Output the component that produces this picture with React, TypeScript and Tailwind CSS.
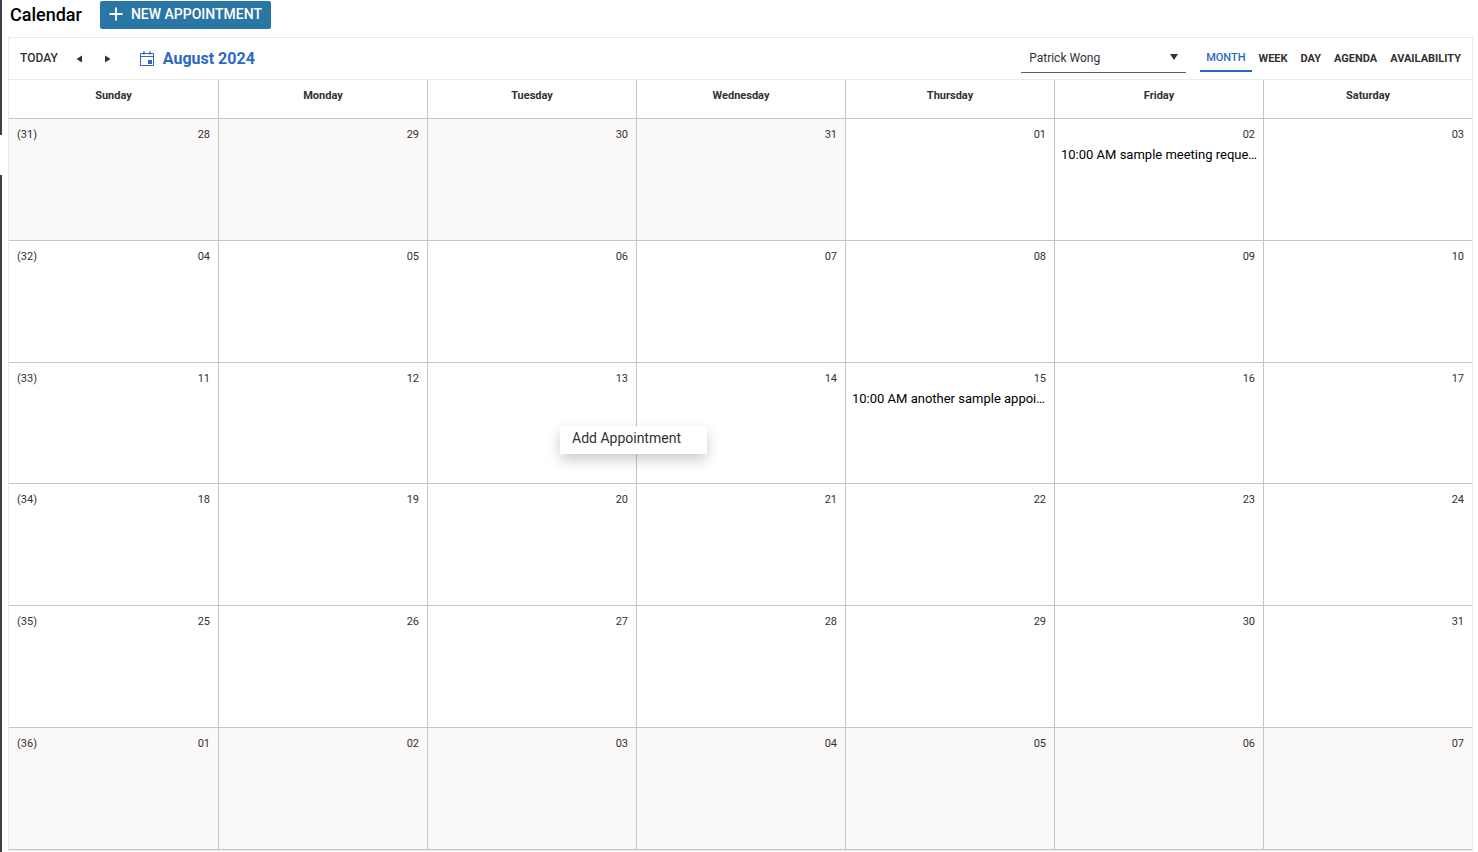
import { useState } from "react";
import clsx from "clsx";

interface Day {
  label: string;
  outside?: boolean;
  event?: string;
  menu?: boolean;
}

interface Week {
  number: number;
  days: Day[];
}

const weekdays = [
  "Sunday",
  "Monday",
  "Tuesday",
  "Wednesday",
  "Thursday",
  "Friday",
  "Saturday",
];

const views = ["Month", "Week", "Day", "Agenda", "Availability"];

const events: Record<string, string> = {
  "2024-08-02": "10:00 AM sample meeting request",
  "2024-08-15": "10:00 AM another sample appointment",
};

const MENU_DATE = "2024-08-13";

function buildWeeks(): Week[] {
  const weeks: Week[] = [];
  for (let w = 0; w < 6; w++) {
    const days: Day[] = [];
    for (let d = 0; d < 7; d++) {
      const date = new Date(Date.UTC(2024, 6, 28 + w * 7 + d));
      const key = date.toISOString().slice(0, 10);
      days.push({
        label: key.slice(8),
        outside: date.getUTCMonth() !== 7,
        event: events[key],
        menu: key === MENU_DATE,
      });
    }
    weeks.push({ number: 31 + w, days });
  }
  return weeks;
}

const weeks = buildWeeks();

function PlusIcon() {
  return (
    <svg width="14" height="14" viewBox="0 0 14 14" aria-hidden="true">
      <path d="M7 0.5v13M0.5 7h13" stroke="currentColor" strokeWidth="1.8" />
    </svg>
  );
}

function CalendarIcon() {
  return (
    <svg
      width="14"
      height="16"
      viewBox="0 0 14 16"
      fill="none"
      stroke="currentColor"
      aria-hidden="true"
    >
      <path d="M0.5 2.5h13v12h-13zM0.5 5.5h13" />
      <path d="M4 0.5v3M10 0.5v3" strokeWidth="1.6" />
      <rect x="8" y="9" width="4" height="4" fill="currentColor" stroke="none" />
    </svg>
  );
}

function ArrowIcon({ path }: { path: string }) {
  return (
    <svg width="8" height="8" viewBox="0 0 8 8" aria-hidden="true">
      <path d={path} fill="currentColor" />
    </svg>
  );
}

function DayCell({ day, week, first }: { day: Day; week: number; first: boolean }) {
  return (
    <td
      className={clsx(
        "relative border-t border-[#c8c6c4] p-0 align-top",
        !first && "border-l",
        day.outside && "bg-[#faf9f8]"
      )}
    >
      <div className="flex justify-between px-2 pt-2 text-[11px] leading-4">
        <span>{first && `(${week})`}</span>
        <span>{day.label}</span>
      </div>
      {day.event && (
        <a
          href="#event"
          className="ml-1.5 mr-1 mt-1 block truncate text-[13px] leading-4 text-black"
        >
          {day.event}
        </a>
      )}
      {day.menu && (
        <div className="absolute left-[132px] top-[63px] z-10 w-[147px] bg-white shadow-[0_6px_14px_rgba(0,0,0,0.2)]">
          <button className="block h-7 w-full px-3 pb-1 text-left text-sm leading-6">
            Add Appointment
          </button>
        </div>
      )}
    </td>
  );
}

export default function App() {
  const [view, setView] = useState("Month");

  return (
    <div className="flex h-screen min-h-[600px] bg-white font-[Roboto,sans-serif] text-[#323130]">
      <div className="flex w-0.5 shrink-0 flex-col gap-10">
        <div className="h-[135px] bg-[#3c4146]" />
        <div className="flex-1 bg-[#3c4146]" />
      </div>

      <main className="flex min-w-0 flex-1 flex-col pb-px pl-1.5 pr-[5px]">
        <header className="flex h-[37px] shrink-0 items-start gap-[18px] pl-0.5 pt-px">
          <h1 className="text-lg font-medium leading-7 text-black">Calendar</h1>
          <button className="flex h-7 items-center gap-2 rounded-xs bg-[#2a77a6] px-[9px] pb-0.5 text-sm font-medium text-white">
            <PlusIcon />
            NEW APPOINTMENT
          </button>
        </header>

        <section className="flex min-h-0 flex-1 flex-col border border-[#eaeaea]">
          <div className="flex h-[42px] shrink-0 items-center border-b border-[#eaeaea] pl-[11px] pr-[5px]">
            <button className="pb-0.5 text-xs font-medium">TODAY</button>
            <button aria-label="Previous month" className="ml-[11px] px-1.5">
              <ArrowIcon path="M7 0.5v7L1.500 4z" />
            </button>
            <button aria-label="Next month" className="ml-[9px] px-1.5">
              <ArrowIcon path="M1 0.5v7L6.500 4z" />
            </button>
            <button className="ml-[22px] flex items-center gap-[9px] text-base font-bold text-[#2b68c5]">
              <CalendarIcon />
              August 2024
            </button>

            <div className="relative ml-auto w-[165px]">
              <select
                aria-label="Calendar owner"
                className="block h-7 w-full appearance-none border-b border-[#605e5c] pl-2 text-xs outline-none"
              >
                <option>Patrick Wong</option>
              </select>
              <span className="pointer-events-none absolute right-2 top-2">
                <ArrowIcon path="M0 1h8L4 7z" />
              </span>
            </div>

            <nav className="ml-3.5 flex items-center gap-px pb-0.5">
              {views.map((name) => (
                <button
                  key={name}
                  onClick={() => setView(name)}
                  className={clsx(
                    "h-7 px-1.5 pt-1 text-[11px] uppercase",
                    name === view
                      ? "border-b-2 border-[#2b68c5] font-medium text-[#2b68c5]"
                      : "font-bold"
                  )}
                >
                  {name}
                </button>
              ))}
            </nav>
          </div>

          <table className="w-full flex-1 table-fixed border-separate border-spacing-0 border-b border-[#c8c6c4]">
            <thead>
              <tr className="h-[38px]">
                {weekdays.map((name, i) => (
                  <th
                    key={name}
                    className={clsx(
                      "border-[#c8c6c4] p-0 pb-1.5 text-[11px] font-bold leading-4",
                      i > 0 && "border-l"
                    )}
                  >
                    {name}
                  </th>
                ))}
              </tr>
            </thead>
            <tbody>
              {weeks.map((week) => (
                <tr key={week.number} className="h-20">
                  {week.days.map((day, i) => (
                    <DayCell
                      key={day.label}
                      day={day}
                      week={week.number}
                      first={i === 0}
                    />
                  ))}
                </tr>
              ))}
            </tbody>
          </table>
        </section>
      </main>
    </div>
  );
}
